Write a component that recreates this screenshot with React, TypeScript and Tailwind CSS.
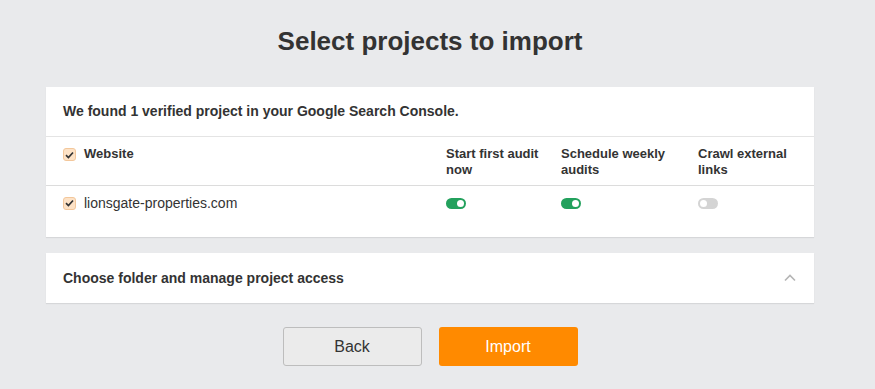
import React, { useState } from "react";

function Check({ checked }: { checked: boolean }) {
    return (
        <span className="flex h-[13px] w-[13px] shrink-0 items-center justify-center rounded-[3px] border border-[#f3c79b] bg-[#fde2c6]">
            {checked && (
                <svg width="9" height="8" viewBox="0 0 9 8">
                    <path d="M1 4.2 L3.4 6.5 L8 1.5" fill="none" stroke="#333" strokeWidth="1.7" />
                </svg>
            )}
        </span>
    );
}

function Toggle({ on }: { on: boolean }) {
    return (
        <span
            className={
                on
                    ? "flex h-[11px] w-[20px] items-center justify-end rounded-full bg-[#23a15d] px-[2px]"
                    : "flex h-[11px] w-[20px] items-center justify-start rounded-full bg-[#d4d4d4] px-[2px]"
            }
        >
            <span className="h-[7px] w-[7px] rounded-full bg-white" />
        </span>
    );
}

export default function App() {
    const [open] = useState(true);

    return (
        <div className="min-h-[389px] bg-[#e9eaec] font-['Liberation_Sans',Arial,sans-serif] text-[#333]">
            <div className="flex w-[860px] flex-col items-center">
                <h1 className="pt-[25px] text-[26px] font-bold leading-[32px] text-[#333]">Select projects to import</h1>

                <div className="mt-[30px] w-[768px] bg-white shadow-[0_1px_1px_rgba(0,0,0,0.08)]">
                    <div className="flex h-[50px] items-center border-b border-[#e4e4e4] px-[17px] text-[14px] font-bold">
                        We found 1 verified project in your Google Search Console.
                    </div>
                    <div className="grid grid-cols-[383px_115px_137px_1fr] border-b border-[#dcdcdc] px-[17px] pt-[9px] pb-[7px] text-[13px] font-bold leading-[16px]">
                        <div className="flex items-start gap-[8px] pt-[2px]">
                            <Check checked />
                            <span className="-mt-[2px]">Website</span>
                        </div>
                        <div className="pr-[4px]">Start first audit now</div>
                        <div className="pr-[20px]">Schedule weekly audits</div>
                        <div>Crawl external links</div>
                    </div>
                    <div className="grid h-[51px] grid-cols-[383px_115px_137px_1fr] content-start px-[17px] pt-[9px] text-[14px] leading-[16px]">
                        <div className="flex h-[16px] items-center gap-[8px]">
                            <Check checked />
                            <span>lionsgate-properties.com</span>
                        </div>
                        <div className="flex h-[16px] items-center">
                            <Toggle on />
                        </div>
                        <div className="flex h-[16px] items-center">
                            <Toggle on />
                        </div>
                        <div className="flex h-[16px] items-center">
                            <Toggle on={false} />
                        </div>
                    </div>
                </div>

                <div className="mt-[16px] flex h-[50px] w-[768px] items-center justify-between bg-white px-[17px] shadow-[0_1px_1px_rgba(0,0,0,0.08)]">
                    <span className="text-[14px] font-bold">Choose folder and manage project access</span>
                    <svg width="12" height="8" viewBox="0 0 12 8" className="mr-[1px]">
                        <path d={open ? "M1 6.5 L6 1.5 L11 6.5" : "M1 1.5 L6 6.5 L11 1.5"} fill="none" stroke="#b5b5b5" strokeWidth="1.6" />
                    </svg>
                </div>

                <div className="mt-[24px] flex gap-[17px]">
                    <button className="h-[39px] w-[139px] rounded-[3px] border border-[#bdbdbd] bg-[#ebebeb] text-[16px] text-[#333]">
                        Back
                    </button>
                    <button className="h-[39px] w-[139px] rounded-[3px] bg-[#ff8a00] text-[16px] text-white">
                        Import
                    </button>
                </div>
            </div>
        </div>
    );
}
